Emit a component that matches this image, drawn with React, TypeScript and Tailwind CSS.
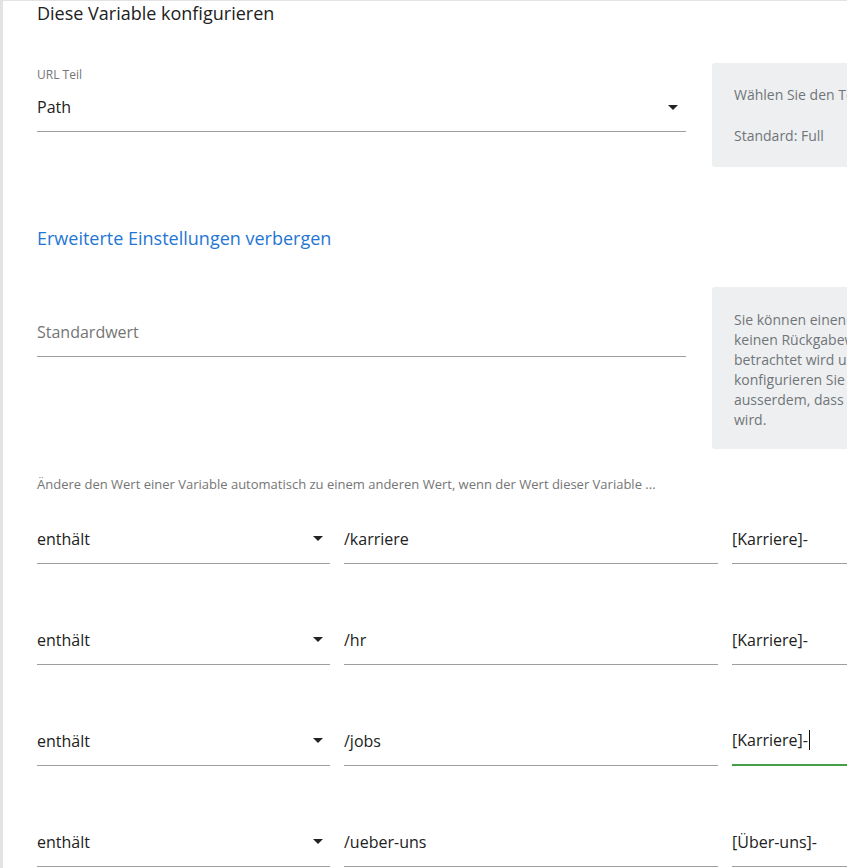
import React from "react";

const font = { fontFamily: '"Open Sans", "Noto Sans", Arial, sans-serif' };

const Caret: React.FC = () => (
  <svg width="10" height="5" viewBox="0 0 10 5" className="shrink-0">
    <path d="M0 0 L10 0 L5 5 Z" fill="#222" />
  </svg>
);

type Rule = { op: string; match: string; value: string; focused?: boolean };

const rules: Rule[] = [
  { op: "enthält", match: "/karriere", value: "[Karriere]-" },
  { op: "enthält", match: "/hr", value: "[Karriere]-" },
  { op: "enthält", match: "/jobs", value: "[Karriere]-", focused: true },
  { op: "enthält", match: "/ueber-uns", value: "[Über-uns]-" },
];

const HelpBox: React.FC<{ children: React.ReactNode; className?: string }> = ({ children, className = "" }) => (
  <div className={`w-[420px] shrink-0 rounded-[3px] bg-[#eeeff0] px-[22px] text-[14px] leading-[20px] text-[#70757a] ${className}`}>
    {children}
  </div>
);

export default function App() {
  return (
    <div
      className="w-[847px] h-[868px] overflow-hidden bg-white border-l-[3px] border-t border-[#e3e3e3] text-[#212121]"
      style={font}
    >
      <div className="w-[1200px] pl-[34px]">
        <h1 className="text-[18px] leading-[24px] font-normal">Diese Variable konfigurieren</h1>

        {/* URL part */}
        <div className="mt-[38px] flex gap-[26px]">
          <div className="w-[649px] shrink-0 pt-[4px]">
            <div className="text-[12px] leading-[16px] text-[#757575]">URL Teil</div>
            <div className="flex h-[49px] items-center justify-between border-b border-[#9e9e9e] pr-[8px] text-[16px]">
              <span>Path</span>
              <Caret />
            </div>
          </div>
          <HelpBox className="pt-[22px] pb-[21px]">
            <p className="whitespace-nowrap">Wählen Sie den Teil der URL, der zurückgegeben werden soll.</p>
            <p className="mt-[21px]">Standard: Full</p>
          </HelpBox>
        </div>

        <div className="mt-[59px] text-[18px] leading-[24px] text-[#1f76d3]">Erweiterte Einstellungen verbergen</div>

        {/* default value */}
        <div className="mt-[37px] flex gap-[26px]">
          <div className="w-[649px] shrink-0 pt-[20px]">
            <div className="flex h-[50px] items-center border-b border-[#9e9e9e] text-[16px] text-[#757575]">
              Standardwert
            </div>
          </div>
          <HelpBox className="pt-[23px] pb-[19px] whitespace-nowrap">
            <div>Sie können einen Standardwert festlegen, der verwendet wird, wenn die Variable</div>
            <div>keinen Rückgabewert liefert. Beachten Sie, dass ein leerer String als Wert</div>
            <div>betrachtet wird und nicht durch den Standardwert ersetzt wird. Falls nötig,</div>
            <div>konfigurieren Sie unten eine entsprechende Regel. Beachten Sie</div>
            <div>ausserdem, dass der Standardwert nicht durch die Regeln unten ersetzt</div>
            <div>wird.</div>
          </HelpBox>
        </div>

        <div className="mt-[26px] text-[13px] leading-[18px] text-[#757575]">
          Ändere den Wert einer Variable automatisch zu einem anderen Wert, wenn der Wert dieser Variable ...
        </div>

        {/* rules */}
        <div className="mt-[21px] flex flex-col gap-[51px]">
          {rules.map((r, i) => (
            <div key={i} className="flex gap-[14px] text-[16px]">
              <div className="flex h-[50px] w-[293px] items-center justify-between border-b border-[#9e9e9e] pr-[7px]">
                <span>{r.op}</span>
                <Caret />
              </div>
              <div className="flex h-[50px] w-[374px] items-center border-b border-[#9e9e9e]">{r.match}</div>
              <div
                className={`flex h-[50px] w-[300px] items-center ${
                  r.focused ? "border-b-2 border-[#43a047]" : "border-b border-[#9e9e9e]"
                }`}
              >
                <span>{r.value}</span>
                {r.focused && <span className="ml-[1px] inline-block h-[20px] w-px bg-[#111]" />}
              </div>
            </div>
          ))}
        </div>
      </div>
    </div>
  );
}
